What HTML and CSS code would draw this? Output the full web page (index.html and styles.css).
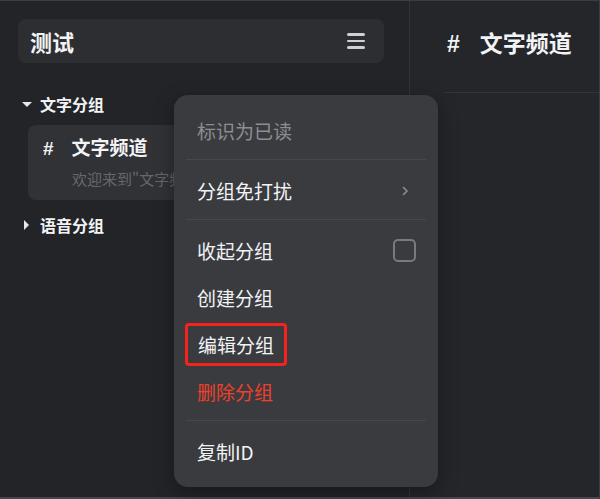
FILE: index.html
```html
<!DOCTYPE html>
<html lang="zh-CN">
<head>
    <meta charset="UTF-8">
    <title>测试</title>
    <link rel="stylesheet" href="styles.css">
</head>
<body>
    <!-- Channel list -->
    <div class="sidebar">
        <div class="server-header">
            <span class="server-name">测试</span>
            <span class="menu-icon"><i></i><i></i><i></i></span>
        </div>

        <div class="group-title"><span class="caret-down"></span>文字分组</div>
        <div class="channel-card">
            <div class="channel-name"><span class="hash">#</span>文字频道</div>
            <div class="channel-desc">欢迎来到"文字频道"</div>
        </div>
        <div class="group-title voice"><span class="caret-right"></span>语音分组</div>
    </div>

    <!-- Current channel -->
    <div class="main">
        <div class="main-header">
            <span class="hash">#</span>文字频道
        </div>
    </div>

    <!-- Group context menu -->
    <div class="context-menu">
        <div class="menu-item muted">标识为已读</div>
        <div class="menu-divider"></div>
        <div class="menu-item">
            分组免打扰
            <svg class="chevron" width="7" height="10" viewBox="0 0 7 10"><path d="M1.5 1.5 L5 5 L1.5 8.5" fill="none" stroke="currentColor" stroke-width="1.6" stroke-linecap="round"/></svg>
        </div>
        <div class="menu-divider"></div>
        <div class="menu-item">
            收起分组
            <span class="checkbox"></span>
        </div>
        <div class="menu-item">创建分组</div>
        <div class="menu-item"><span class="highlight">编辑分组</span></div>
        <div class="menu-item danger">删除分组</div>
        <div class="menu-divider"></div>
        <div class="menu-item">复制ID</div>
    </div>
</body>
</html>
```

FILE: styles.css
```css
* {
    margin: 0;
    padding: 0;
    box-sizing: border-box;
}

body {
    font-family: 'Noto Sans CJK SC', 'Noto Sans', sans-serif;
    background-color: #25262a;
    color: #f2f3f5;
    display: flex;
    height: 499px;
    border-top: 1px solid #3c3d41;
    border-right: 1px solid #3c3d41;
    border-bottom: 2px solid #46474b;
    overflow: hidden;
}

.sidebar {
    width: 410px;
    flex-shrink: 0;
    padding: 18px 25px 0 18px;
    border-right: 1px solid #313236;
    background-color: #232428;
}

.server-header {
    height: 44px;
    border-radius: 8px;
    background-color: #2d2e32;
    display: flex;
    align-items: center;
    justify-content: space-between;
    padding: 0 19px 0 12px;
}

.server-name {
    font-size: 22px;
    font-weight: bold;
    line-height: 30px;
}

.menu-icon {
    display: flex;
    flex-direction: column;
    gap: 4px;
    width: 18px;
}

.menu-icon i {
    display: block;
    height: 2.5px;
    border-radius: 2px;
    background-color: #cfd0d3;
}

.group-title {
    display: flex;
    align-items: center;
    margin-top: 29px;
    height: 24px;
    font-size: 16px;
    font-weight: bold;
    padding-left: 4px;
}

.group-title.voice {
    margin-top: 13px;
    padding-left: 6px;
}

.caret-down {
    width: 0;
    height: 0;
    border-left: 5px solid transparent;
    border-right: 5px solid transparent;
    border-top: 5px solid #e6e7ea;
    margin-right: 8px;
}

.caret-right {
    width: 0;
    height: 0;
    border-top: 5px solid transparent;
    border-bottom: 5px solid transparent;
    border-left: 5px solid #e6e7ea;
    margin-right: 11px;
}

.channel-card {
    margin: 9px 0 0 10px;
    height: 75px;
    border-radius: 8px;
    background-color: #313236;
    padding: 8px 15px 0;
}

.channel-name {
    font-size: 19px;
    font-weight: bold;
    line-height: 28px;
}

.hash {
    font-family: 'Liberation Sans', sans-serif;
    font-weight: bold;
    margin-right: 18px;
}

.channel-desc {
    margin-top: 5px;
    padding-left: 29px;
    font-size: 15px;
    line-height: 22px;
    color: #66676b;
    white-space: nowrap;
}

.main {
    flex: 1;
    padding-left: 35px;
}

.main-header {
    height: 92px;
    border-bottom: 1px solid #34353a;
    padding: 26px 0 0 2px;
    font-size: 23px;
    font-weight: bold;
    line-height: 30px;
}

.main-header .hash {
    margin-right: 20px;
}

/* context menu floats over the sidebar */
.context-menu {
    position: absolute;
    left: 174px;
    top: 95px;
    width: 264px;
    padding: 12px;
    border-radius: 14px;
    background-color: #3a3b3f;
    box-shadow: 0 6px 20px rgba(0, 0, 0, 0.35);
}

.menu-item {
    height: 47px;
    display: flex;
    align-items: center;
    justify-content: space-between;
    padding: 0 10px 0 11px;
    font-size: 19px;
    color: #f2f3f5;
}

.menu-item.muted {
    color: #8d8e92;
}

.menu-item.danger {
    color: #f0402b;
}

.menu-divider {
    height: 1px;
    background-color: #47484c;
    margin: 5px 0 7px;
}

.chevron {
    color: #8b8c90;
    margin-right: 7px;
}

.checkbox {
    width: 23px;
    height: 23px;
    border: 2px solid #797a7e;
    border-radius: 5px;
}

.highlight {
    margin-left: -12px;
    padding: 5px 10px;
    border: 3px solid #f5231b;
    border-radius: 4px;
}
```
